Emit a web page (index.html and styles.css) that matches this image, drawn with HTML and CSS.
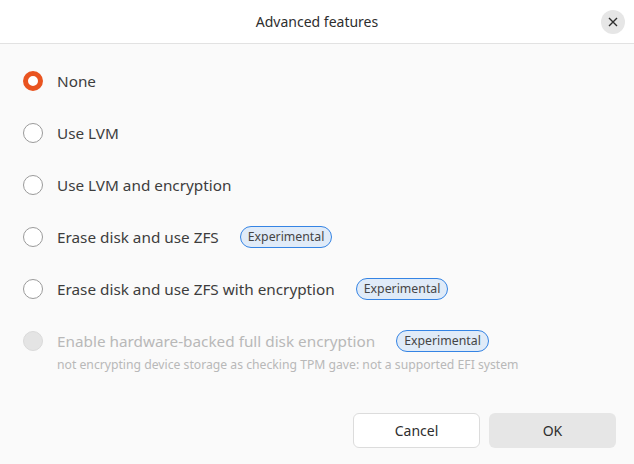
FILE: index.html
```html
<!DOCTYPE html>
<html lang="en">
<head>
    <meta charset="UTF-8">
    <title>Advanced features</title>
    <link rel="stylesheet" href="styles.css">
</head>
<body>
    <div class="dialog">
        <header class="titlebar">
            <h1>Advanced features</h1>
            <button class="close" aria-label="Close">
                <svg width="10" height="10" viewBox="0 0 10 10"><path d="M1 1L9 9M9 1L1 9" stroke="#2e2e2e" stroke-width="1.4" fill="none"/></svg>
            </button>
        </header>
        <main class="options">
            <label class="option">
                <span class="radio checked"></span>
                <span class="label">None</span>
            </label>
            <label class="option">
                <span class="radio"></span>
                <span class="label">Use LVM</span>
            </label>
            <label class="option">
                <span class="radio"></span>
                <span class="label">Use LVM and encryption</span>
            </label>
            <label class="option">
                <span class="radio"></span>
                <span class="label">Erase disk and use ZFS</span>
                <span class="badge">Experimental</span>
            </label>
            <label class="option">
                <span class="radio"></span>
                <span class="label">Erase disk and use ZFS with encryption</span>
                <span class="badge">Experimental</span>
            </label>
            <div class="option disabled">
                <span class="radio"></span>
                <span class="label">Enable hardware-backed full disk encryption</span>
                <span class="badge">Experimental</span>
            </div>
            <p class="hint">not encrypting device storage as checking TPM gave: not a supported EFI system</p>
        </main>
        <footer class="actions">
            <button class="btn cancel">Cancel</button>
            <button class="btn ok">OK</button>
        </footer>
    </div>
</body>
</html>
```

FILE: styles.css
```css
body {
    margin: 0;
    font-family: "Noto Sans", "Open Sans", sans-serif;
    color: #3d3d3d;
    background-color: #fafafa;
}

.dialog {
    width: 634px;
    height: 464px;
    display: flex;
    flex-direction: column;
}

.titlebar {
    height: 44px;
    box-sizing: border-box;
    background-color: #fff;
    border-bottom: 1px solid #e2e2e2;
    display: flex;
    align-items: center;
    justify-content: center;
    position: relative;
}

.titlebar h1 {
    margin: 0;
    font-size: 14px;
    font-weight: normal;
    color: #2e2e2e;
}

.close {
    position: absolute;
    right: 9px;
    top: 10px;
    width: 24px;
    height: 24px;
    border-radius: 50%;
    border: none;
    background-color: #e6e6e6;
    display: flex;
    align-items: center;
    justify-content: center;
    padding: 0;
}

.options {
    padding: 25px 23px 0;
    flex: 1;
}

.option {
    display: flex;
    align-items: center;
    height: 24px;
    margin-bottom: 28px;
    font-size: 15.3px;
}

.radio {
    width: 18px;
    height: 18px;
    border: 1px solid #9a9a9a;
    border-radius: 50%;
    background-color: #fff;
    flex: none;
    margin-right: 14px;
}

.radio.checked {
    width: 10px;
    height: 10px;
    border: 5px solid #e95420;
}

.badge {
    margin-left: 21px;
    font-size: 12.3px;
    color: #454545;
    background-color: #e0ebf8;
    border: 1px solid #3584e4;
    border-radius: 12px;
    padding: 2px 7px;
    line-height: 16px;
}

.disabled {
    margin-bottom: 0;
}

.disabled .radio {
    background-color: #e4e4e4;
    border-color: #dadada;
}

.disabled .label {
    color: #b8b8b8;
}

.hint {
    margin: 3px 0 0 34px;
    font-size: 12.2px;
    color: #b8b8b8;
}

.actions {
    display: flex;
    justify-content: flex-end;
    gap: 9px;
    padding: 0 18px 16px;
}

.btn {
    width: 127px;
    height: 35px;
    border-radius: 6px;
    font-family: inherit;
    font-size: 14px;
    color: #2e2e2e;
}

.cancel {
    background-color: #fff;
    border: 1px solid #dcdcdc;
}

.ok {
    background-color: #e6e6e6;
    border: none;
}
```
